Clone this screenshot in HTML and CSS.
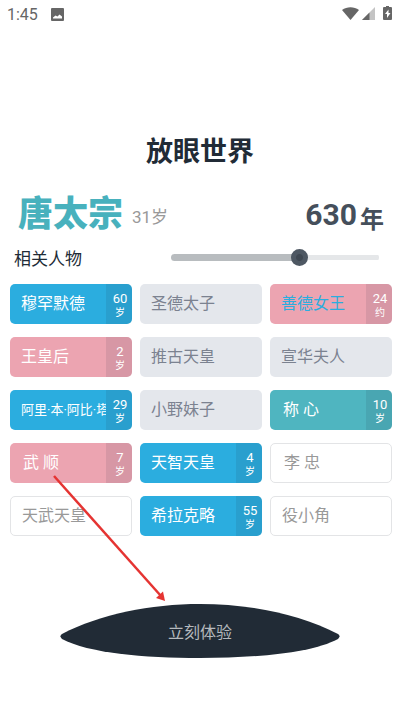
FILE: index.html
```html
<!DOCTYPE html>
<html lang="zh-CN">
<head>
<meta charset="utf-8">
<meta name="viewport" content="width=device-width, initial-scale=1">
<title>放眼世界</title>
<link rel="stylesheet" href="styles.css">
</head>
<body>
<header class="status">
  <span>1:45</span>
  <svg class="photo" width="13" height="13" viewBox="0 0 13 13"><path fill="#666" fill-rule="evenodd" d="M1 0h11q1 0 1 1v11q0 1-1 1H1q-1 0-1-1V1q0-1 1-1zM2 10.500h9V8.500L8.500 6.500 6.500 8.500 4.500 7.500 2 9.500z"/></svg>
  <svg class="signals" width="52" height="16" viewBox="0 0 52 16">
    <path fill="#666" d="M0 4C5 .2 12 .2 17 4L8.500 14z"/>
    <path fill="#c4c4c4" d="M33 1v13H20z"/>
    <path fill="#666" d="M27.500 6.500V14H20z"/>
    <path fill="#666" d="M44 0h3v1h2q1 0 1 1v11q0 1-1 1h-7q-1 0-1-1V2q0-1 1-1h2z"/>
    <path fill="#fff" d="M46.500 3.500L43 8h2v4l3.500-5h-2z"/>
  </svg>
</header>
<main>
  <h1>放眼世界</h1>
  <section class="person">
    <h2>唐太宗</h2>
    <span class="age">31岁</span>
    <p class="year">630<small>年</small></p>
  </section>
  <section class="filter">
    <label for="year">相关人物</label>
    <input id="year" type="range" min="0" max="100" value="63">
  </section>
  <ul class="people">
    <li class="card blue"><span class="name">穆罕默德</span><span class="tag">60<small>岁</small></span></li>
    <li class="card gray"><span class="name">圣德太子</span></li>
    <li class="card pink link"><span class="name">善德女王</span><span class="tag">24<small>约</small></span></li>
    <li class="card pink"><span class="name">王皇后</span><span class="tag">2<small>岁</small></span></li>
    <li class="card gray"><span class="name">推古天皇</span></li>
    <li class="card gray"><span class="name">宣华夫人</span></li>
    <li class="card blue long"><span class="name">阿里·本·阿比·塔</span><span class="tag">29<small>岁</small></span></li>
    <li class="card gray"><span class="name">小野妹子</span></li>
    <li class="card teal short"><span class="name">称 心</span><span class="tag">10<small>岁</small></span></li>
    <li class="card pink short"><span class="name">武 顺</span><span class="tag">7<small>岁</small></span></li>
    <li class="card blue"><span class="name">天智天皇</span><span class="tag">4<small>岁</small></span></li>
    <li class="card outline short"><span class="name">李 忠</span></li>
    <li class="card outline"><span class="name">天武天皇</span></li>
    <li class="card blue"><span class="name">希拉克略</span><span class="tag">55<small>岁</small></span></li>
    <li class="card outline"><span class="name">役小角</span></li>
  </ul>
  <button class="start" type="button">
    <svg viewBox="0 0 278 54" preserveAspectRatio="none"><path fill="#212b36" d="M2 30C40 10 90 0 139 0S238 10 276 30Q279 32 276 35C250 49 195 54 139 54S28 49 2 35Q-1 32 2 30z"/></svg>
    <span>立刻体验</span>
  </button>
  <svg class="arrow" width="114" height="128" viewBox="0 0 114 128"><path stroke="#e53432" stroke-width="2.500" d="M1 1L108 121"/><path fill="#e53432" d="M112 126l-9-3 7-6.500z"/></svg>
</main>
</body>
</html>
```
FILE: styles.css
```css
* {
  box-sizing: border-box;
}

body {
  margin: 0;
  background: #fff;
  color: #212b36;
  font-family: Roboto, "Noto Sans CJK SC", sans-serif;
  font-size: 16px;
}

.status {
  display: flex;
  align-items: center;
  height: 28px;
  padding: 0 6px 0 7px;
  color: #666;
}

.photo {
  margin-left: 13px;
}

.signals {
  margin-left: auto;
}

main {
  position: relative;
  padding-top: 104px;
}

h1 {
  margin: 0;
  font-size: 27px;
  font-weight: 700;
  line-height: 40px;
  text-align: center;
}

.person {
  display: flex;
  align-items: center;
  height: 48px;
  margin-top: 19px;
  padding: 0 16px 0 18px;
}

h2 {
  margin: 0;
  color: #48b1bd;
  font-size: 35px;
  font-weight: 900;
  line-height: 48px;
}

.age {
  margin-left: 9px;
  color: #999;
  font-size: 17px;
}

.year {
  margin: 0 0 0 auto;
  color: #454f5b;
  font-size: 30px;
  font-weight: 700;
  line-height: 48px;
}

.year small {
  margin-left: 3px;
  font-size: 24px;
  vertical-align: -3px;
  line-height: 24px;
}

.filter {
  display: flex;
  align-items: center;
  justify-content: space-between;
  height: 36px;
  padding: 0 21px 0 14px;
  font-size: 17px;
}

.filter input {
  width: 57%;
  height: 17px;
  margin: 0;
  appearance: none;
  background: none;
}

.filter input::-webkit-slider-runnable-track {
  height: 7px;
  border-radius: 4px;
  background:
    linear-gradient(#b8bcbf, #b8bcbf) left center / 62% 7px no-repeat,
    linear-gradient(#e5e7e9, #e5e7e9) right center / 38% 5px no-repeat;
}

.filter input::-webkit-slider-thumb {
  appearance: none;
  width: 17px;
  height: 17px;
  margin-top: -5px;
  border-radius: 50%;
  background: radial-gradient(circle, #3f4852 3px, #4e5863 4px);
}

.people {
  display: grid;
  grid-template-columns: repeat(3, minmax(0, 1fr));
  gap: 13px 8px;
  margin: 9px 8px 0 10px;
  padding: 0;
  list-style: none;
}

.card {
  display: flex;
  height: 40px;
  padding-left: 11px;
  overflow: hidden;
  border-radius: 5px;
  color: #fff;
  line-height: 40px;
}

.name {
  flex: 1;
  overflow: hidden;
  white-space: nowrap;
}

.tag {
  display: flex;
  flex-direction: column;
  align-items: center;
  width: 26px;
  padding: 7px 0 0 2px;
  background: rgba(33, 43, 54, 0.1);
  font-size: 13px;
  line-height: 15px;
}

.tag small {
  font-size: 10px;
  line-height: 14px;
}

.blue {
  background: #2baddf;
}

.pink {
  background: #eca4b1;
}

.teal {
  background: #4fb5c0;
}

.gray {
  background: #e4e7ec;
  color: #7b8290;
}

.outline {
  border: 1px solid #e3e4e6;
  color: #999;
  line-height: 38px;
}

.link {
  color: #2baddf;
}

.link .tag {
  color: #fff;
}

.long .name {
  font-size: 13px;
}

.short {
  padding-left: 13px;
}

.start {
  display: grid;
  place-items: center;
  width: 70%;
  height: 54px;
  margin: 68px auto 0;
  padding: 0;
  border: 0;
  background: none;
  color: #b5b9bd;
  font: inherit;
}

.start > * {
  grid-area: 1 / 1;
}

.start svg {
  width: 100%;
  height: 54px;
}

.arrow {
  position: absolute;
  top: 447px;
  left: 53px;
  pointer-events: none;
}
```
